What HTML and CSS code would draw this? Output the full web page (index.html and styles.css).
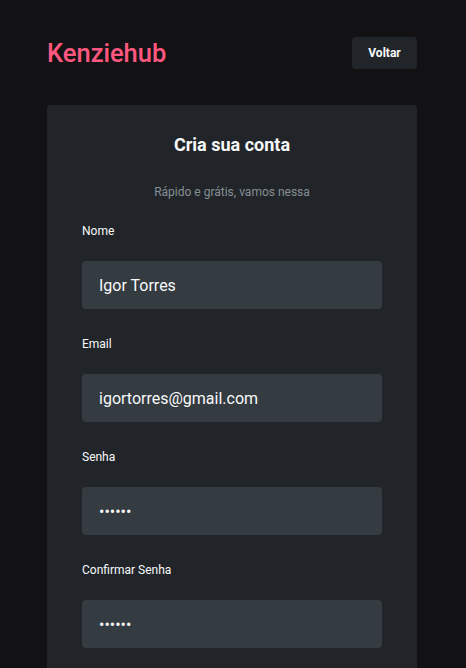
FILE: index.html
```html
<!DOCTYPE html>
<html lang="pt-BR">
<head>
<meta charset="utf-8">
<title>Kenziehub - Cadastro</title>
<link rel="stylesheet" href="styles.css">
</head>
<body>
<div class="page">
  <header class="header">
    <h1 class="logo">Kenziehub</h1>
    <button class="back-btn" type="button">Voltar</button>
  </header>
  <main class="card">
    <h2 class="card-title">Cria sua conta</h2>
    <p class="card-subtitle">Rápido e grátis, vamos nessa</p>
    <form class="form">
      <div class="field">
        <label class="label" for="nome">Nome</label>
        <input class="input" id="nome" type="text" value="Igor Torres">
      </div>
      <div class="field">
        <label class="label" for="email">Email</label>
        <input class="input" id="email" type="email" value="igortorres@gmail.com">
      </div>
      <div class="field">
        <label class="label" for="senha">Senha</label>
        <input class="input" id="senha" type="password" value="123456">
      </div>
      <div class="field">
        <label class="label" for="confirmar">Confirmar Senha</label>
        <input class="input" id="confirmar" type="password" value="123456">
      </div>
    </form>
  </main>
</div>
</body>
</html>
```

FILE: styles.css
```css
* { box-sizing: border-box; }
html, body {
  margin: 0;
  padding: 0;
  background: #121214;
}
body {
  font-family: Roboto, "Noto Sans", sans-serif;
  color: #F8F9FA;
}
.page {
  padding: 37px 49px 40px 47px;
}
.header {
  display: flex;
  align-items: center;
  justify-content: space-between;
  height: 32px;
}
.logo {
  margin: 0;
  font-size: 25.5px;
  font-weight: 500;
  color: #FF577F;
  line-height: 32px;
}
.back-btn {
  width: 65px;
  height: 32px;
  border: none;
  border-radius: 4px;
  background: #212529;
  color: #F8F9FA;
  font-family: inherit;
  font-size: 12px;
  font-weight: 700;
}
.card {
  margin-top: 36px;
  background: #212529;
  border-radius: 4px;
  padding: 28px 35px 40px;
  display: flex;
  flex-direction: column;
}
.card-title {
  margin: 0;
  text-align: center;
  font-size: 18px;
  font-weight: 700;
  line-height: 24px;
}
.card-subtitle {
  margin: 27px 0 0;
  text-align: center;
  font-size: 12px;
  line-height: 16px;
  color: #868E96;
}
.form {
  margin-top: 23px;
  display: flex;
  flex-direction: column;
  gap: 27px;
}
.field {
  display: flex;
  flex-direction: column;
  gap: 22px;
}
.label {
  font-size: 12px;
  line-height: 16px;
  color: #F8F9FA;
}
.input {
  height: 48px;
  border: none;
  border-radius: 4px;
  background: #343B41;
  color: #F8F9FA;
  font-family: inherit;
  font-size: 16px;
  padding: 0 17px;
  outline: none;
}
```
